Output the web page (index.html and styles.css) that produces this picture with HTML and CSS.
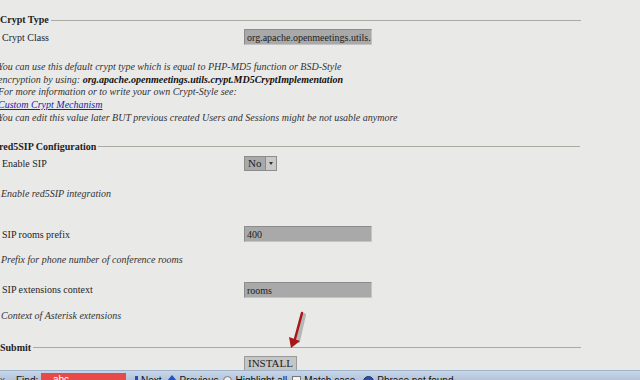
FILE: index.html
```html
<!DOCTYPE html>
<html lang="en">
<head>
    <meta charset="UTF-8">
    <meta name="viewport" content="width=device-width, initial-scale=1.0">
    <link rel="stylesheet" href="styles.css">
</head>
<body>
    <div class="page">
        <!-- Crypt Type -->
        <div class="legend"><span>Crypt Type</span><i class="rule"></i></div>
        <div class="row first">
            <label>Crypt Class</label>
            <div class="field">org.apache.openmeetings.utils.crypt.MD5CryptImplementation</div>
        </div>
        <p class="note crypt-note">
            You can use this default crypt type which is equal to PHP-MD5 function or BSD-Style<br>
            encryption by using: <b>org.apache.openmeetings.utils.crypt.MD5CryptImplementation</b><br>
            For more information or to write your own Crypt-Style see:<br>
            <a href="#">Custom Crypt Mechanism</a><br>
            You can edit this value later BUT previous created Users and Sessions might be not usable anymore
        </p>

        <!-- red5SIP -->
        <div class="legend sip"><span>red5SIP Configuration</span><i class="rule"></i></div>
        <div class="row first">
            <label>Enable SIP</label>
            <div class="select"><span>No</span><i class="drop"></i></div>
        </div>
        <p class="note after-select">Enable red5SIP integration</p>

        <div class="row wide">
            <label>SIP rooms prefix</label>
            <div class="field">400</div>
        </div>
        <p class="note">Prefix for phone number of conference rooms</p>

        <div class="row mid">
            <label>SIP extensions context</label>
            <div class="field">rooms</div>
        </div>
        <p class="note">Context of Asterisk extensions</p>

        <!-- Submit -->
        <div class="legend submit"><span>Submit</span><i class="rule"></i></div>
        <div class="row button-row">
            <span class="spacer"></span>
            <button class="install-btn">INSTALL</button>
        </div>
    </div>

    <svg class="arrow" width="30" height="44" viewBox="0 0 30 44">
        <path d="M20 2 L14 28" stroke="#5a5a5a" stroke-opacity="0.35" stroke-width="4" stroke-linecap="round" fill="none" transform="translate(2,2)"/>
        <path d="M20 2 L13 28" stroke="#a8161a" stroke-width="2.5" stroke-linecap="round" fill="none"/>
        <path d="M7 26 L18 30 L9 37 Z" fill="#a8161a"/>
    </svg>

    <div class="findbar">
        <span class="close">x</span>
        <span class="find-label">Find:</span>
        <span class="find-input">abc</span>
        <span class="fb-item"><i class="fb-down"></i>Next</span>
        <span class="fb-item"><i class="fb-up"></i>Previous</span>
        <span class="fb-item"><i class="fb-hl"></i>Highlight all</span>
        <span class="fb-item"><i class="fb-box"></i>Match case</span>
        <span class="fb-item status"><i class="fb-info"></i>Phrase not found</span>
    </div>
</body>
</html>
```

FILE: styles.css
```css
* {
    margin: 0;
    padding: 0;
    box-sizing: border-box;
}

body {
    width: 640px;
    height: 380px;
    overflow: hidden;
    background: #e9e9e8;
    font-family: "Liberation Serif", "Times New Roman", serif;
    font-size: 10px;
    color: #1e1e1e;
    position: relative;
}

.page {
    padding-top: 14px;
}

.legend {
    width: 581px;
    height: 12px;
    display: flex;
    align-items: center;
    gap: 2px;
    font-weight: bold;
    line-height: 12px;
}

.legend .rule {
    flex: 1;
    height: 1px;
    background: #a9aaa2;
}

.legend.sip {
    margin-top: 16px;
    margin-left: -1px;
}

.legend.submit {
    margin-top: 19px;
}

.row {
    display: flex;
    align-items: center;
    height: 16px;
}

.row label {
    width: 244px;
    padding-left: 2px;
}

.row.first {
    margin-top: 3px;
}

.row.wide {
    margin-top: 26px;
}

.row.mid {
    margin-top: 15px;
}

.field {
    width: 128px;
    height: 16px;
    padding: 0 2px;
    line-height: 15px;
    background: #a9a9a9;
    border: 1px solid #8c8c8c;
    border-right-color: #c4c4c4;
    border-bottom-color: #c4c4c4;
    white-space: nowrap;
    overflow: hidden;
    color: #222;
}

.select {
    display: flex;
    height: 15px;
    width: 33px;
    background: #a9a9a9;
    border: 1px solid #8c8c8c;
}

.select span {
    flex: 1;
    padding-left: 3px;
    line-height: 13px;
    font-size: 11px;
}

.select .drop {
    width: 11px;
    background: #c9c9c9;
    border-left: 1px solid #8c8c8c;
    position: relative;
}

.select .drop::after {
    content: "";
    position: absolute;
    left: 3px;
    top: 5px;
    border: 2px solid transparent;
    border-top: 3px solid #333;
}

.note {
    font-style: italic;
    line-height: 12.7px;
    color: #333;
    margin-top: 12px;
    margin-left: 1px;
}

.note.crypt-note {
    margin-top: 16px;
    margin-left: -2px;
}

.note.after-select {
    margin-top: 16px;
}

.note b {
    color: #111;
}

.note a {
    color: #1b1bb0;
}

.button-row {
    margin-top: 2px;
    height: 15px;
}

.spacer {
    width: 244px;
}

.install-btn {
    height: 15px;
    padding: 0 3px;
    font-family: "Liberation Serif", "Times New Roman", serif;
    font-size: 11px;
    line-height: 13px;
    color: #222;
    background: #c6c6c6;
    border: 1px solid #9a9a9a;
}

.arrow {
    position: absolute;
    left: 282px;
    top: 311px;
}

.findbar {
    position: absolute;
    left: 0;
    top: 370px;
    width: 640px;
    height: 10px;
    overflow: hidden;
    background: linear-gradient(#c9d6e8, #b3c4dc);
    border-top: 1px solid #9fb2cc;
    display: flex;
    align-items: flex-start;
    font-family: "Liberation Sans", Arial, sans-serif;
    font-size: 10px;
    line-height: 14px;
    color: #111;
    padding-top: 3px;
}

.close {
    width: 16px;
    color: #555;
}

.find-label {
    width: 25px;
}

.find-input {
    width: 85px;
    height: 14px;
    margin-top: -1px;
    background: #e84a4a;
    color: #fff;
    padding-left: 12px;
    margin-right: 9px;
}

.fb-item {
    display: flex;
    gap: 3px;
    margin-right: 5px;
}

.fb-item i {
    display: block;
    margin-top: 2px;
}

.fb-down {
    width: 3px;
    height: 10px;
    background: #1d4fbd;
}

.fb-up {
    width: 0;
    height: 0;
    border: 5px solid transparent;
    border-bottom: 6px solid #1d55c8;
    margin-top: -4px !important;
}

.fb-hl {
    width: 9px;
    height: 9px;
    border-radius: 50%;
    border: 1px solid #777;
    background: #eee;
}

.fb-box {
    width: 9px;
    height: 9px;
    border: 1px solid #777;
    background: #f4f4f4;
}

.status {
    margin-left: 3px;
}

.fb-info {
    width: 11px;
    height: 11px;
    border-radius: 50%;
    background: #2b4fa8;
    border: 1px solid #1c3475;
}
```
